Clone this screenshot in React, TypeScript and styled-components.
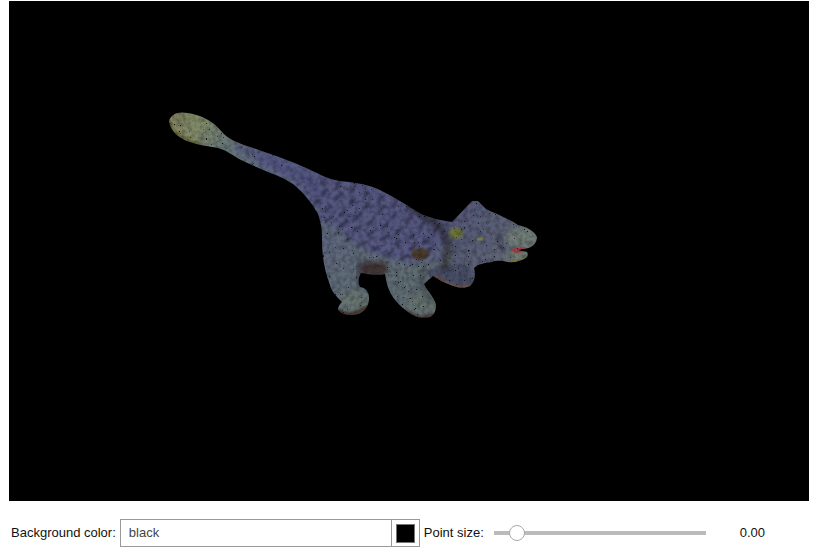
import React from "react";
import styled, { createGlobalStyle } from "styled-components";

const GlobalStyle = createGlobalStyle`
  html, body {
    margin: 0;
    padding: 0;
    background: #fff;
    font-family: "Liberation Sans", Arial, sans-serif;
    font-size: 13px;
    color: #111;
  }
`;

const silhouette =
  "M169 122 C170 114 178 111 188 113 C202 115 214 122 222 132 C228 139 238 143 250 147 C268 153 288 160 304 167 C316 172 326 179 340 181 C352 182 366 184 378 189 C392 196 404 203 416 211 C428 218 440 220 452 222 L472 201 L478 201 L486 209 C496 214 508 218 518 225 C526 227 534 230 537 237 C537 243 533 246 529 248 L516 250 L527 252 C528 254 528 255 527 257 C522 261 514 263 508 262 C502 261 498 260 492 262 C484 263 478 264 474 268 C476 274 475 282 470 286 C464 289 456 288 448 284 C442 282 438 279 433 276 L424 284 C428 292 435 298 436 305 C436 311 434 315 430 317 C422 319 414 317 408 312 C400 306 394 300 390 292 C387 286 386 280 385 274 C378 276 368 274 361 273 C358 278 358 283 360 287 C366 288 369 292 369 298 C369 305 366 311 358 314 C350 316 342 315 338 310 C338 306 340 304 342 302 C336 296 331 291 330 285 C325 272 322 258 322 240 C322 232 322 226 318 214 C312 203 303 192 293 184 C284 178 276 175 268 172 C258 168 250 164 241 160 C232 155 226 150 218 148 C208 146 198 145 190 142 C180 139 171 132 169 122 Z";

const specks = (() => {
  const out: { x: number; y: number; o: number }[] = [];
  let seed = 11;
  const rnd = () => {
    seed = (seed * 16807) % 2147483647;
    return seed / 2147483647;
  };
  for (let i = 0; i < 800; i++) {
    const x = 168 + Math.floor(rnd() * 370);
    const y = 110 + Math.floor(rnd() * 210);
    if (x < 318 && x > 225 && rnd() < 0.65) continue;
    out.push({ x, y, o: 0.45 + rnd() * 0.5 });
  }
  return out;
})();

// dark gaps between the bumps on the back, in rows along the spine
const bumps = (() => {
  const out: { x: number; y: number; a: number; l: number }[] = [];
  for (let i = 0; i < 9; i++) {
    for (let j = 0; j < 5; j++) {
      const x = 322 + i * 14 - j * 5 + (j % 2) * 5;
      const y = 184 + i * 4.6 + j * 11;
      out.push({ x, y, a: -55 + j * 6, l: 6 + ((i + j) % 3) * 1.5 });
    }
  }
  return out;
})();

function Dinosaur() {
  return (
    <DinoSvg viewBox="9 1 800 500" width={800} height={500} aria-hidden>
      <defs>
        <clipPath id="dino">
          <path d={silhouette} />
        </clipPath>
        <linearGradient id="tailFill" x1="169" y1="120" x2="330" y2="190" gradientUnits="userSpaceOnUse">
          <stop offset="0" stopColor="#80825c" />
          <stop offset="0.18" stopColor="#808a68" />
          <stop offset="0.34" stopColor="#6a7876" />
          <stop offset="0.6" stopColor="#5a5f84" />
          <stop offset="1" stopColor="#55567e" />
        </linearGradient>
        <linearGradient id="headFill" x1="450" y1="205" x2="537" y2="260" gradientUnits="userSpaceOnUse">
          <stop offset="0" stopColor="#525574" />
          <stop offset="0.6" stopColor="#5d6274" />
          <stop offset="1" stopColor="#6d7872" />
        </linearGradient>
        <linearGradient id="legFill" x1="330" y1="225" x2="400" y2="315" gradientUnits="userSpaceOnUse">
          <stop offset="0" stopColor="#5c647c" />
          <stop offset="0.6" stopColor="#606d76" />
          <stop offset="1" stopColor="#687672" />
        </linearGradient>
        <filter id="mottle" x="-5%" y="-5%" width="110%" height="110%" colorInterpolationFilters="sRGB">
          <feTurbulence type="fractalNoise" baseFrequency="0.22" numOctaves="2" seed="4" result="n" />
          <feColorMatrix in="n" type="matrix" values="0 0 0 0 0.05  0 0 0 0 0.05  0 0 0 0 0.1  0.7 0 0 0 -0.26" result="shade" />
          <feComposite in="shade" in2="SourceGraphic" operator="in" result="dark" />
          <feMerge>
            <feMergeNode in="SourceGraphic" />
            <feMergeNode in="dark" />
          </feMerge>
        </filter>
        <filter id="soft" x="-60%" y="-60%" width="220%" height="220%">
          <feGaussianBlur stdDeviation="2.4" />
        </filter>
        <filter id="softer" x="-30%" y="-30%" width="160%" height="160%">
          <feGaussianBlur stdDeviation="1.1" />
        </filter>
      </defs>
      <g clipPath="url(#dino)">
        <g filter="url(#mottle)">
          <rect x="160" y="105" width="385" height="220" fill="url(#legFill)" />
          <path d="M160 105 L345 105 L345 200 L318 225 L160 160 Z" fill="url(#tailFill)" />
          {/* back */}
          <path d="M300 165 L380 180 L458 222 L440 262 C410 268 380 262 356 244 C340 232 328 216 316 212 Z" fill="#565880" filter="url(#soft)" />
          <g filter="url(#softer)">
            {bumps.map((b) => (
              <line
                key={`${b.x}-${b.y}`}
                x1={b.x}
                y1={b.y}
                x2={b.x + b.l * Math.cos((b.a * Math.PI) / 180)}
                y2={b.y + b.l * Math.sin((b.a * Math.PI) / 180)}
                stroke="#2f2f48"
                strokeWidth="3"
                strokeLinecap="round"
                opacity="0.75"
              />
            ))}
          </g>
          {/* underside of the plates */}
          <path d="M322 226 C340 244 372 262 412 264 C424 264 436 256 446 244" fill="none" stroke="#626e7a" strokeWidth="6" filter="url(#soft)" opacity="0.7" />
          {/* head */}
          <path d="M448 222 L475 195 L545 230 L540 265 L470 292 L452 262 Z" fill="url(#headFill)" filter="url(#softer)" />
          <ellipse cx="521" cy="238" rx="15" ry="10" fill="#707c74" filter="url(#soft)" />
          <ellipse cx="520" cy="256" rx="12" ry="5" fill="#717e72" filter="url(#softer)" />
          <path d="M500 232 C496 240 498 248 506 250" fill="none" stroke="#43465a" strokeWidth="3" filter="url(#softer)" />
          {/* far front leg */}
          <path d="M426 272 C440 262 456 264 470 266 L478 290 L440 290 Z" fill="#484f66" filter="url(#softer)" />
          {/* legs */}
          <path d="M320 232 C340 240 352 250 362 258 L360 300 L372 320 L335 320 L322 280 Z" fill="url(#legFill)" filter="url(#soft)" />
          <path d="M386 266 C400 272 414 272 426 262 L424 288 L440 320 L405 320 L386 290 Z" fill="#5f6c72" filter="url(#soft)" />
          <ellipse cx="354" cy="301" rx="13" ry="11" fill="#66756f" filter="url(#soft)" />
          <ellipse cx="420" cy="304" rx="13" ry="11" fill="#63706d" filter="url(#soft)" />
          {/* tail shading */}
          <path d="M236 146 L300 174 L322 196" fill="none" stroke="#45467a" strokeWidth="5" filter="url(#soft)" opacity="0.6" />
          <path d="M200 144 L250 164 L292 186 L318 214" fill="none" stroke="#6a7a78" strokeWidth="5" filter="url(#soft)" opacity="0.6" />
          {/* neck shadow */}
          <path d="M412 208 C432 220 446 228 448 246 L444 270" fill="none" stroke="#2c2b30" strokeWidth="7" filter="url(#soft)" opacity="0.8" />
          <ellipse cx="456" cy="233" rx="7" ry="5.5" fill="#6e7538" filter="url(#softer)" />
          <ellipse cx="420" cy="254" rx="9" ry="6" fill="#4a3b2c" filter="url(#softer)" />
          <ellipse cx="480" cy="239" rx="3" ry="1.5" fill="#7d7a3c" />
          {/* belly */}
          <path d="M358 272 C368 278 378 278 388 272 L386 262 L362 262 Z" fill="#3f3033" filter="url(#soft)" />
          <path d="M436 276 C448 287 462 290 472 286" fill="none" stroke="#7a5440" strokeWidth="3" filter="url(#softer)" />
          {/* shadow side of the legs */}
          <path d="M360 258 C358 270 356 282 360 290" fill="none" stroke="#33353e" strokeWidth="4" filter="url(#soft)" opacity="0.7" />
          <path d="M424 270 C420 282 424 292 432 300" fill="none" stroke="#33353e" strokeWidth="4" filter="url(#soft)" opacity="0.7" />
          {/* feet */}
          <path d="M338 310 C344 316 356 316 368 306" fill="none" stroke="#4a3228" strokeWidth="3.5" filter="url(#softer)" />
          <path d="M408 312 C416 319 426 320 434 314" fill="none" stroke="#573a30" strokeWidth="3.5" filter="url(#softer)" />
          {/* knob edge */}
          <path d="M169 122 C172 134 184 140 200 144" fill="none" stroke="#5f5a26" strokeWidth="3" filter="url(#softer)" opacity="0.7" />
        </g>
        <path d="M510 249 L525 247 L527 252 L515 253 Z" fill="#9a3a44" />
        <path d="M503 263 L527 258" stroke="#7a6c30" strokeWidth="1.2" />
        {specks.map((s) => (
          <rect key={`${s.x}-${s.y}`} x={s.x} y={s.y} width="1" height="1" fill="#06060c" opacity={s.o} />
        ))}
      </g>
    </DinoSvg>
  );
}

export default function App() {
  return (
    <Page>
      <GlobalStyle />
      <Viewer>
        <Dinosaur />
      </Viewer>
      <Controls>
        <Label>Background color:</Label>
        <ColorField>
          <ColorText defaultValue="black" />
          <SwatchCell>
            <Swatch $color="#000" />
          </SwatchCell>
        </ColorField>
        <Label>Point size:</Label>
        <SliderTrack>
          <SliderThumb />
        </SliderTrack>
        <Value>0.00</Value>
      </Controls>
    </Page>
  );
}

const Page = styled.div`
  width: 827px;
  height: 559px;
  padding: 1px 0 0 9px;
  box-sizing: border-box;
  overflow: hidden;
`;
const Viewer = styled.div`
  width: 800px;
  height: 500px;
  background: #000;
`;
const DinoSvg = styled.svg`
  display: block;
`;
const Controls = styled.div`
  display: flex;
  align-items: center;
  height: 28px;
  margin-top: 18px;
  padding-left: 2px;
`;
const Label = styled.label`
  margin-right: 4px;
  padding-bottom: 2px;
  white-space: nowrap;
`;
const ColorField = styled.div`
  display: flex;
  width: 300px;
  height: 28px;
  box-sizing: border-box;
  border: 1px solid #999;
  margin-right: 4px;
  background: #fff;
`;
const ColorText = styled.input`
  flex: 1;
  min-width: 0;
  border: 0;
  outline: 0;
  padding: 0 8px 2px;
  font: inherit;
  color: #444;
`;
const SwatchCell = styled.div`
  display: flex;
  align-items: center;
  justify-content: center;
  width: 27px;
  border-left: 1px solid #999;
`;
const Swatch = styled.div<{ $color: string }>`
  width: 19px;
  height: 19px;
  box-sizing: border-box;
  border: 1px solid #777;
  background: ${(p) => p.$color};
`;
const SliderTrack = styled.div`
  position: relative;
  width: 212px;
  height: 4px;
  margin-left: 6px;
  background: #bbb;
`;
const SliderThumb = styled.div`
  position: absolute;
  left: 15px;
  top: -6px;
  width: 16px;
  height: 16px;
  box-sizing: border-box;
  border: 1px solid #aaa;
  border-radius: 50%;
  background: #fff;
`;
const Value = styled.span`
  margin-left: 34px;
  padding-bottom: 2px;
`;
